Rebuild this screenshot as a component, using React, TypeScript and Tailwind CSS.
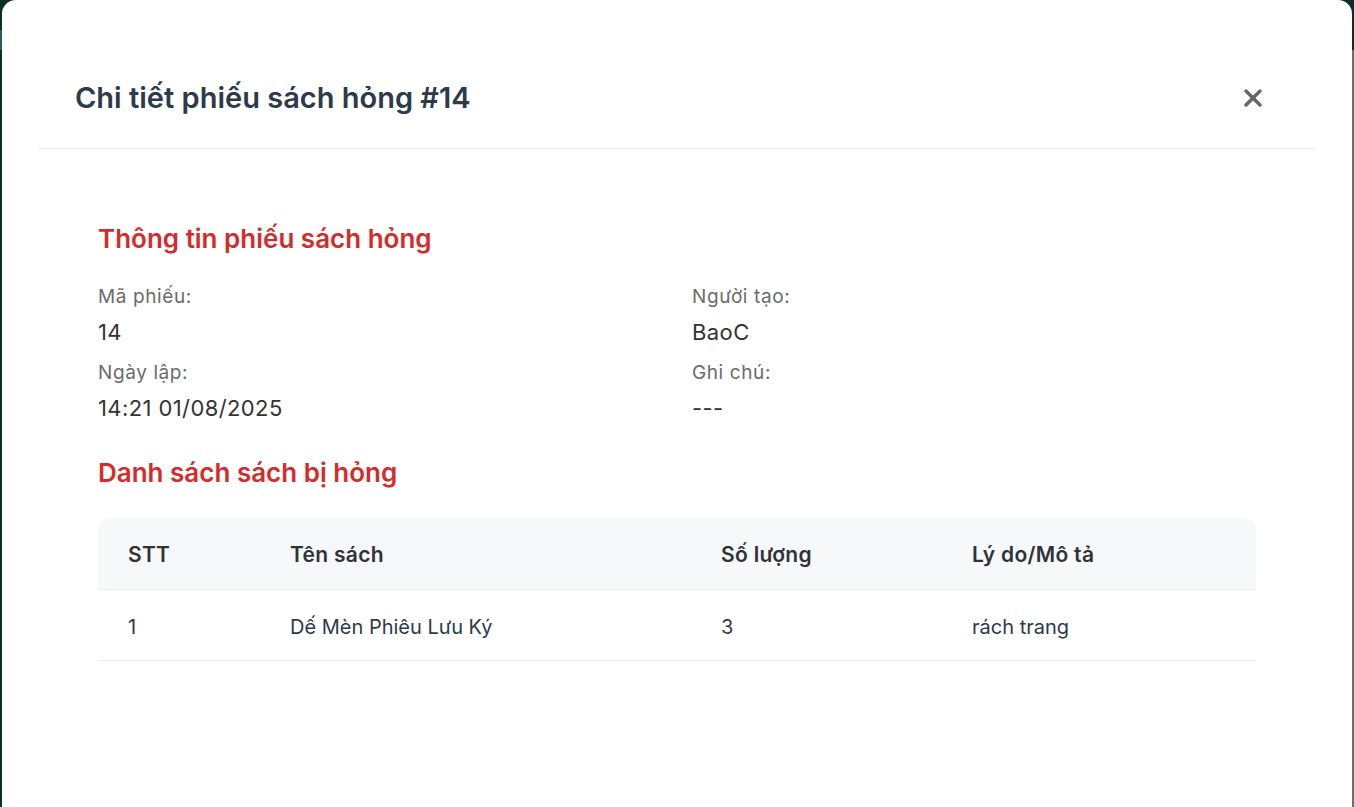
import { X } from 'lucide-react'

const FONT = "font-['Inter','Noto_Sans',sans-serif]"

const INFO = [
  [
    { label: 'Mã phiếu:', value: '14' },
    { label: 'Ngày lập:', value: '14:21 01/08/2025' },
  ],
  [
    { label: 'Người tạo:', value: 'BaoC' },
    { label: 'Ghi chú:', value: '---' },
  ],
]

const ROWS = [{ stt: '1', name: 'Dế Mèn Phiêu Lưu Ký', qty: '3', reason: 'rách trang' }]

function Field({ label, value }: { label: string; value: string }) {
  return (
    <div className="flex flex-col">
      <span className="text-[19px] leading-[24px] tracking-[0.6px] text-[#6b6b6b]">{label}</span>
      <span className="mt-[9px] text-[22px] leading-[28px] tracking-[0.4px] text-[#333]">{value}</span>
    </div>
  )
}

export default function App() {
  return (
    <div className={`${FONT} flex h-[807px] w-[1354px] overflow-hidden bg-[#0c2f2b]`}>
      {/* left backdrop strip */}
      <div className="flex w-[2px] flex-col">
        <div className="h-[30px] bg-[#0c2f2b]" />
        <div className="h-[20px] bg-[#2a5a55]" />
        <div className="flex-1 bg-[#0c2f2b]" />
      </div>

      {/* Modal */}
      <div className="flex flex-1 flex-col rounded-t-[14px] bg-white">
        {/* Header */}
        <div className="mx-[36px] flex items-center justify-between border-b border-[#e8ebef] pt-[80px] pb-[32px]">
          <h2 className="pl-[37px] text-[29px] font-semibold leading-[36px] text-[#2d3a4b]">
            Chi tiết phiếu sách hỏng #14
          </h2>
          <button className="mr-[49px] text-[#666]">
            <X size={28} strokeWidth={3} />
          </button>
        </div>

        {/* Body */}
        <div className="flex flex-col px-[96px] pt-[74px]">
          <h3 className="text-[26px] font-semibold leading-[32px] text-[#d42b2b]">
            Thông tin phiếu sách hỏng
          </h3>
          <div className="mt-[30px] grid grid-cols-[594px_1fr]">
            {INFO.map((col, i) => (
              <div key={i} className="flex flex-col gap-[15px]">
                {col.map((f) => (
                  <Field key={f.label} {...f} />
                ))}
              </div>
            ))}
          </div>

          <h3 className="mt-[35px] text-[26px] font-semibold leading-[32px] text-[#d42b2b]">
            Danh sách sách bị hỏng
          </h3>

          <div className="mt-[29px] w-[1158px]">
            <div className="grid h-[72px] grid-cols-[162px_431px_251px_1fr] items-center rounded-t-[12px] border-b border-[#e8ebef] bg-[#f7f8fa] pt-[2px] text-[21px] font-semibold tracking-[0.3px] text-[#2f3337]">
              {['STT', 'Tên sách', 'Số lượng', 'Lý do/Mô tả'].map((h) => (
                <span key={h} className="px-[30px]">
                  {h}
                </span>
              ))}
            </div>
            {ROWS.map((r) => (
              <div
                key={r.stt}
                className="grid h-[71px] grid-cols-[162px_431px_251px_1fr] items-center border-b border-[#e8ebef] pt-[3px] text-[20px] text-[#2d3a4b]"
              >
                <span className="px-[30px]">{r.stt}</span>
                <span className="px-[30px]">{r.name}</span>
                <span className="px-[30px]">{r.qty}</span>
                <span className="px-[30px]">{r.reason}</span>
              </div>
            ))}
          </div>
        </div>
      </div>

      {/* right edge: backdrop + scrollbar */}
      <div className="flex w-[2px] flex-col">
        <div className="h-[50px] bg-[#0c2f2b]" />
        <div className="flex-1 bg-[#6e6e6e]" />
      </div>
    </div>
  )
}
